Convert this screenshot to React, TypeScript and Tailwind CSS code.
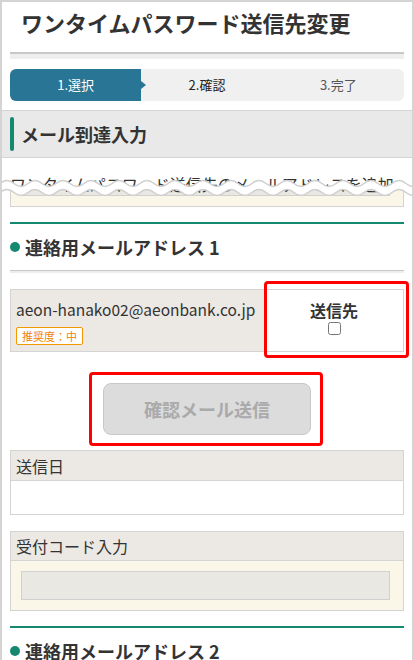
import React from "react";

function waveSegs(y: number, amp: number, period: number, n: number, reverse: boolean) {
  const half = period / 2;
  const segs: string[] = [];
  if (!reverse) {
    for (let i = 0; i < n; i++) {
      const x0 = i * half;
      const c = y + (i % 2 === 0 ? -2 * amp : 2 * amp);
      segs.push(`Q${x0 + half / 2},${c} ${x0 + half},${y}`);
    }
  } else {
    for (let i = n - 1; i >= 0; i--) {
      const x0 = i * half;
      const c = y + (i % 2 === 0 ? -2 * amp : 2 * amp);
      segs.push(`Q${x0 + half / 2},${c} ${x0},${y}`);
    }
  }
  return segs.join(" ");
}

function TornEdge() {
  const period = 28;
  const n = Math.ceil(420 / (period / 2));
  const xEnd = n * (period / 2);
  const yTop = 7.5;
  const yBot = 16.5;
  const amp = 3;
  const fill = `M0,${yTop} ${waveSegs(yTop, amp, period, n, false)} L${xEnd},${yBot} ${waveSegs(yBot, amp, period, n, true)} Z`;
  const top = `M0,${yTop} ${waveSegs(yTop, amp, period, n, false)}`;
  const bot = `M0,${yBot} ${waveSegs(yBot, amp, period, n, false)}`;
  return (
    <svg className="absolute left-[-2px] top-[18px]" width="414" height="24" viewBox="0 0 414 24">
      <path d={fill} fill="#ffffff" />
      <path d={top} fill="none" stroke="#cfcfcf" strokeWidth="1.5" />
      <path d={bot} fill="none" stroke="#cfcfcf" strokeWidth="1.5" />
    </svg>
  );
}

function SectionTitle({ label }: { label: string }) {
  return (
    <>
      <div className="h-[2px] bg-[#15896f]" />
      <div className="h-[46px] flex items-center">
        <span className="w-[10px] h-[10px] rounded-full bg-[#15896f]" />
        <span className="ml-[5px] text-[18px] font-bold text-[#333]">{label}</span>
      </div>
    </>
  );
}

export default function App() {
  return (
    <div className="w-[414px] h-[660px] overflow-hidden bg-white border-x-2 border-t-2 border-[#d4d4d4] font-['Noto_Sans_CJK_JP',sans-serif] text-[#333]">
      <div className="px-2">
        <h1 className="h-[50px] leading-[40px] pl-[11px] text-[22px] font-bold text-[#333]">
          ワンタイムパスワード送信先変更
        </h1>
        <div className="h-[2px] bg-[#c8c8c8]" />
        <div className="h-[5px] bg-[#eeeeee]" />
        <div className="mt-[10px] h-[32px] flex rounded-[6px] bg-[#f0f0f0] text-[13px]">
          <div className="relative flex-1 flex items-center justify-center rounded-l-[6px] bg-[#287595] text-white">
            1.選択
            <span className="absolute right-[-5px] top-[12px] w-0 h-0 border-y-[4px] border-y-transparent border-l-[5px] border-l-[#287595]" />
          </div>
          <div className="flex-1 flex items-center justify-center text-[#222]">2.確認</div>
          <div className="flex-1 flex items-center justify-center text-[#555]">3.完了</div>
        </div>
      </div>

      <div className="mt-[9px] h-[48px] border-y border-[#d4d4d4] bg-[#e9e9e9] px-2 flex items-center">
        <span className="w-[4px] h-[34px] rounded-[2px] bg-[#15896f]" />
        <span className="ml-[7px] text-[18px] font-bold text-[#333]">メール到達入力</span>
      </div>

      <div className="relative px-2 pt-[14px]">
        <p className="h-[24px] leading-[24px] text-[16px] overflow-hidden text-[#333]">
          ワンタイムパスワード送信先のメールアドレスを追加してください。
        </p>
        <div className="-mt-[10px] border border-[#d4d4d4] bg-[#faf7e9] pl-[10px] pr-[13px] pb-[10px]">
          <div className="h-[9px] border-x border-b border-[#d0d0d0] bg-[#e9e8e2]" />
        </div>
        <TornEdge />

        <div className="mt-[15px]">
          <SectionTitle label="連絡用メールアドレス 1" />
        </div>
        <div className="h-[1px] bg-[#c8c8c8]" />
        <div className="h-[2px] bg-[#eeeeee]" />

        <div className="relative mt-[16px] h-[63px] flex border border-[#d4d4d4]">
          <div className="w-[253px] bg-[#ece8e4] pl-[5px] pt-[7px]">
            <div className="text-[15.5px] leading-[24px] text-[#333]">aeon-hanako02@aeonbank.co.jp</div>
            <div className="mt-[6px] inline-flex h-[18px] items-center border border-[#f39800] bg-white px-[5px] text-[11px] leading-none text-[#f08300] rounded-[2px]">
              推奨度：中
            </div>
          </div>
          <div className="flex-1 bg-white border-l border-[#d4d4d4] flex flex-col items-center pt-[8px]">
            <span className="text-[16px] leading-[24px] font-bold text-[#333]">送信先</span>
            <input type="checkbox" readOnly className="m-0 w-[13px] h-[13px]" />
          </div>
          <div className="absolute left-[253px] top-[-9px] w-[145px] h-[77px] border-[3px] border-[#ff0000] rounded-[4px]" />
        </div>

        <div className="relative mt-[31px] mx-auto w-[208px] h-[52px]">
          <div className="w-full h-full rounded-[8px] border border-[#c8c8c8] bg-[#dcdcdc] flex items-center justify-center text-[18px] font-bold text-[#aaaaaa]">
            確認メール送信
          </div>
          <div className="absolute left-[-14px] top-[-11px] w-[234px] h-[74px] border-[3px] border-[#ff0000] rounded-[4px]" />
        </div>

        <div className="mt-[15px] border border-[#d4d4d4]">
          <div className="h-[30px] bg-[#ece8e4] border-b border-[#d4d4d4] flex items-center px-[5px] text-[16px] text-[#333]">
            送信日
          </div>
          <div className="h-[33px] bg-white" />
        </div>

        <div className="mt-[16px] border border-[#d4d4d4]">
          <div className="h-[29px] bg-[#ece8e4] border-b border-[#d4d4d4] flex items-center px-[5px] text-[16px] text-[#333]">
            受付コード入力
          </div>
          <div className="h-[49px] bg-[#faf7e9] pt-[10px] pl-[10px] pr-[13px]">
            <div className="h-[29px] border border-[#d0d0d0] bg-[#e9e8e2]" />
          </div>
        </div>

        <div className="mt-[15px]">
          <SectionTitle label="連絡用メールアドレス 2" />
        </div>
      </div>
    </div>
  );
}
